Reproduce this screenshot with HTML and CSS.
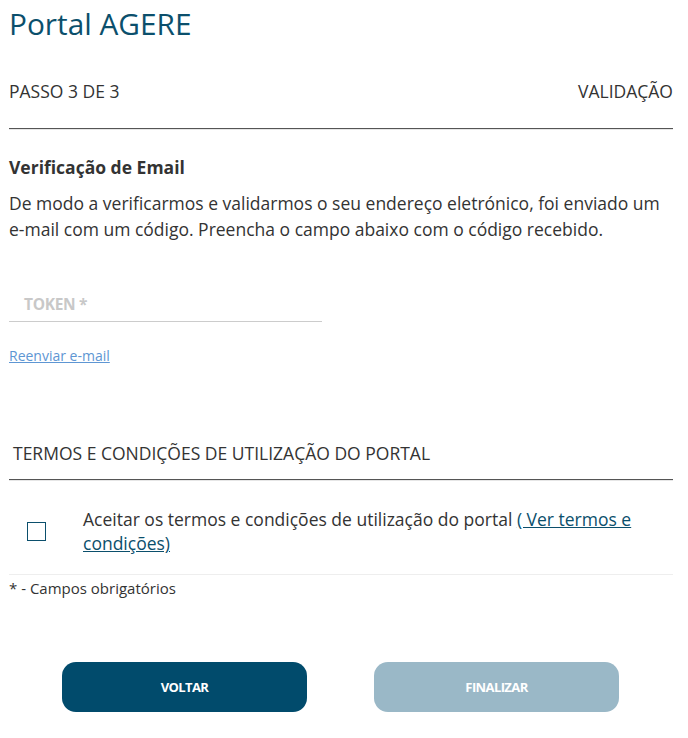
FILE: index.html
```html
<!DOCTYPE html>
<html lang="pt">
<head>
<meta charset="utf-8">
<title>Portal AGERE</title>
<link rel="stylesheet" href="styles.css">
</head>
<body>
<div class="page">
  <h1 class="title">Portal AGERE</h1>
  <div class="steps">
    <span>PASSO 3 DE 3</span>
    <span>VALIDAÇÃO</span>
  </div>
  <div class="rule"></div>

  <section class="verify">
    <h2 class="subtitle">Verificação de Email</h2>
    <p class="desc">De modo a verificarmos e validarmos o seu endereço eletrónico, foi enviado um e-mail com um código. Preencha o campo abaixo com o código recebido.</p>
    <div class="field">
      <span class="field-label">TOKEN *</span>
    </div>
    <div class="resend-row"><a class="resend" href="#">Reenviar e-mail</a></div>
  </section>

  <section class="terms">
    <div class="terms-title">TERMOS E CONDIÇÕES DE UTILIZAÇÃO DO PORTAL</div>
    <div class="rule"></div>
    <div class="accept">
      <span class="checkbox"></span>
      <span class="accept-text">Aceitar os termos e condições de utilização do portal <a href="#" class="terms-link">( Ver termos e condições)</a></span>
    </div>
    <div class="required">* - Campos obrigatórios</div>
  </section>

  <div class="actions">
    <button class="btn btn-primary">VOLTAR</button>
    <button class="btn btn-disabled">FINALIZAR</button>
  </div>
</div>
</body>
</html>
```
FILE: styles.css
```css
* { box-sizing: border-box; }
html, body { margin: 0; padding: 0; background: #fff; }
body {
  font-family: "Open Sans", "Noto Sans", sans-serif;
  color: #333;
}
.page {
  padding: 0 15px 0 9px;
}
.title {
  margin: 0;
  padding-top: 5px;
  font-size: 29.8px;
  font-weight: 400;
  line-height: 38px;
  color: #0b4f6c;
}
.steps {
  display: flex;
  justify-content: space-between;
  margin-top: 36px;
  font-size: 17.5px;
  line-height: 24px;
  color: #333;
}
.rule {
  height: 2px;
  border-top: 1px solid #555;
  border-bottom: 1px solid #e6e6e6;
}
.steps + .rule { margin-top: 25px; }
.verify { padding-top: 25px; }
.subtitle {
  margin: 0;
  font-size: 17.5px;
  font-weight: 700;
  line-height: 24px;
  color: #333;
}
.desc {
  margin: 11px 0 0;
  font-size: 17.5px;
  line-height: 26px;
  color: #333;
}
.field {
  width: 313px;
  margin-top: 50px;
  padding: 0 0 5px 15px;
  border-bottom: 1px solid #ccc;
  line-height: 24px;
}
.field-label {
  font-size: 15.5px;
  font-weight: 700;
  line-height: 24px;
  color: #c8c8c8;
  letter-spacing: -0.3px;
}
.resend-row {
  margin-top: 23px;
  line-height: 20px;
  height: 20px;
}
.resend {
  font-size: 14px;
  line-height: 20px;
  color: #5e96d3;
  text-decoration: underline;
}
.terms { padding-top: 76px; }
.terms-title {
  padding-left: 4px;
  font-size: 17.5px;
  line-height: 24px;
  color: #333;
}
.terms-title + .rule { margin-top: 14px; }
.accept {
  display: flex;
  align-items: center;
  padding: 26px 0 19px 18px;
  border-bottom: 1px solid #eee;
}
.checkbox {
  flex: none;
  width: 19px;
  height: 19px;
  border: 1.5px solid #0b4f6c;
  margin-right: 37px;
}
.accept-text {
  font-size: 17.5px;
  line-height: 24px;
  color: #333;
}
.terms-link {
  color: #0b4f6c;
  text-decoration: underline;
}
.required {
  padding-top: 3px;
  font-size: 15px;
  line-height: 20px;
  color: #333;
}
.actions {
  display: flex;
  justify-content: space-between;
  padding: 64px 54px 0 53px;
}
.btn {
  width: 245px;
  height: 50px;
  border: none;
  border-radius: 14px;
  font-family: "Open Sans", "Noto Sans", sans-serif;
  font-size: 13px;
  font-weight: 700;
  color: #fff;
  letter-spacing: -0.6px;
}
.btn-primary { background: #014b6c; }
.btn-disabled { background: #9ab8c7; }
```
